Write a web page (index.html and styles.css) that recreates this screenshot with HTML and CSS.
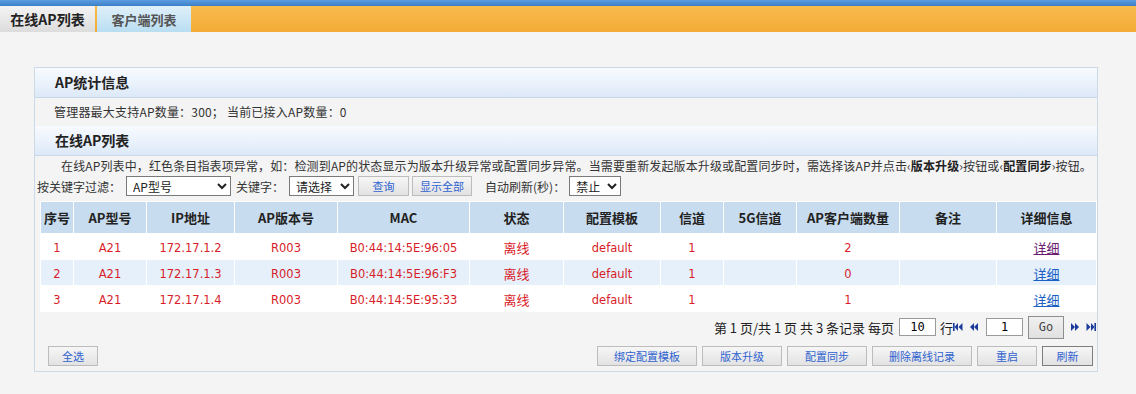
FILE: index.html
```html
<!DOCTYPE html>
<html lang="zh-CN">
  <head>
    <meta charset="UTF-8" />
    <title>在线AP列表</title>
    <link rel="stylesheet" href="styles.css">
  </head>
  <body>
    <div class="topbar"></div>
    <div class="tabs">
      <div class="tab active">在线AP列表</div>
      <div class="tab">客户端列表</div>
    </div>

    <div class="content">
      <div class="panel">
        <div class="panel-head">AP统计信息</div>
        <div class="stats">管理器最大支持AP数量：300； 当前已接入AP数量：0</div>

        <div class="panel-head">在线AP列表</div>
        <p class="note">在线AP列表中，红色条目指表项异常，如：检测到AP的状态显示为版本升级异常或配置同步异常。当需要重新发起版本升级或配置同步时，需选择该AP并点击‹<b>版本升级</b>›按钮或‹<b>配置同步</b>›按钮。</p>

        <div class="filter">
          <span>按关键字过滤：</span>
          <select class="sel-type"><option>AP型号</option></select>
          <span>关键字：</span>
          <select class="sel-key"><option>请选择</option></select>
          <button class="btn btn-query">查询</button>
          <button class="btn btn-all">显示全部</button>
          <span class="refresh-label">自动刷新(秒)：</span>
          <select class="sel-refresh"><option>禁止</option></select>
        </div>

        <table class="ap-table">
          <colgroup>
            <col style="width:32px"><col style="width:72px"><col style="width:87px">
            <col style="width:102px"><col style="width:131px"><col style="width:93px">
            <col style="width:96px"><col style="width:62px"><col style="width:72px">
            <col style="width:102px"><col style="width:96px"><col>
          </colgroup>
          <thead>
            <tr>
              <th>序号</th><th>AP型号</th><th>IP地址</th><th>AP版本号</th><th>MAC</th><th>状态</th>
              <th>配置模板</th><th>信道</th><th>5G信道</th><th>AP客户端数量</th><th>备注</th><th>详细信息</th>
            </tr>
          </thead>
          <tbody>
            <tr>
              <td>1</td><td>A21</td><td>172.17.1.2</td><td>R003</td><td>B0:44:14:5E:96:05</td>
              <td class="cjk">离线</td><td>default</td><td>1</td><td></td><td>2</td><td></td>
              <td><a href="#" class="visited">详细</a></td>
            </tr>
            <tr class="alt">
              <td>2</td><td>A21</td><td>172.17.1.3</td><td>R003</td><td>B0:44:14:5E:96:F3</td>
              <td class="cjk">离线</td><td>default</td><td>1</td><td></td><td>0</td><td></td>
              <td><a href="#">详细</a></td>
            </tr>
            <tr>
              <td>3</td><td>A21</td><td>172.17.1.4</td><td>R003</td><td>B0:44:14:5E:95:33</td>
              <td class="cjk">离线</td><td>default</td><td>1</td><td></td><td>1</td><td></td>
              <td><a href="#">详细</a></td>
            </tr>
          </tbody>
        </table>

        <div class="pager">
          <span>第 1 页/共 1 页 共 3 条记录 每页</span>
          <input class="pg-input pg-rows" type="text" value="10" />
          <span>行</span>
          <svg class="pg-icon" viewBox="0 0 10 10" width="10" height="10"><rect x="0" y="1" width="1.6" height="8" /><polygon points="5,1 5,9 1.5,5" /><polygon points="9.5,1 9.5,9 5.5,5" /></svg>
          <svg class="pg-icon gap" viewBox="0 0 10 10" width="10" height="10"><polygon points="5,1 5,9 1,5" /><polygon points="9,1 9,9 5,5" /></svg>
          <input class="pg-input pg-page" type="text" value="1" />
          <button class="go">Go</button>
          <svg class="pg-icon gap" viewBox="0 0 10 10" width="10" height="10"><polygon points="1,1 1,9 5,5" /><polygon points="5,1 5,9 9,5" /></svg>
          <svg class="pg-icon gap" viewBox="0 0 10 10" width="10" height="10"><polygon points="0.5,1 0.5,9 4.5,5" /><polygon points="5,1 5,9 8.5,5" /><rect x="8.4" y="1" width="1.6" height="8" /></svg>
        </div>

        <div class="actions">
          <button class="btn w-50">全选</button>
          <div class="actions-right">
            <button class="btn w-100">绑定配置模板</button>
            <button class="btn w-80">版本升级</button>
            <button class="btn w-80">配置同步</button>
            <button class="btn w-100">删除离线记录</button>
            <button class="btn w-60">重启</button>
            <button class="btn w-51 dark">刷新</button>
          </div>
        </div>
      </div>
    </div>
  </body>
</html>
```

FILE: styles.css
```css
body {
  margin: 0;
  background-color: #f4f4f4;
  color: #333;
  font-family: "Noto Sans CJK SC", "DejaVu Sans", sans-serif;
  font-size: 12px;
}
.topbar {
  height: 6px;
  background: linear-gradient(#5b9de0, #3b7fc7);
}
.tabs {
  display: flex;
  height: 26px;
  background: linear-gradient(#f8bb4c, #f4ab36);
}
.tab {
  width: 94px;
  margin-right: 3px;
  display: flex;
  align-items: center;
  justify-content: center;
  font-size: 13px;
  font-weight: bold;
  color: #555;
  background: linear-gradient(#dff0fa, #b9ddf1);
}
.tab.active {
  width: 95px;
  margin-right: 2px;
  font-size: 14px;
  color: #222;
  background: linear-gradient(#f4f4f4, #dcdcdc);
}

.content {
  padding: 35px 0 0 34px;
}
.panel {
  box-sizing: border-box;
  width: 1064px;
  border: 1px solid #ccd9e6;
  padding-bottom: 5px;
}
.panel-head {
  height: 29px;
  line-height: 29px;
  padding-left: 20px;
  font-size: 14px;
  font-weight: bold;
  color: #222;
  background: linear-gradient(#f8fbff, #dde9f8);
  border-bottom: 1px solid #c9d8e8;
}
.stats {
  height: 28px;
  line-height: 28px;
  padding-left: 19px;
  letter-spacing: 0.2px;
}
.note {
  margin: 0;
  padding: 1px 0 0 2px;
  height: 18px;
  line-height: 18px;
  text-indent: 2em;
  white-space: nowrap;
  letter-spacing: 0.13px;
}
.note b {
  color: #222;
}
.filter {
  display: flex;
  align-items: center;
  height: 22px;
  padding-left: 2px;
}
.filter select {
  height: 20px;
  font-size: 12px;
  font-family: "Noto Sans CJK SC", sans-serif;
  border: 1px solid #7a7a7a;
  border-radius: 0;
  background: white;
  color: #222;
  padding: 0 0 0 2px;
}
.sel-type { width: 105px; margin: 0 5px 0 5px; }
.sel-key { width: 65px; margin: 0 4px 0 5px; font-size: 13px; }
.sel-refresh { width: 52px; margin-left: 4px; }
.btn-query { width: 51px; margin-right: 3px; }
.btn-all { width: 60px; margin-right: 13px; }

.btn {
  height: 20px;
  padding: 0;
  font-family: "Noto Sans CJK SC", sans-serif;
  font-size: 11px;
  color: #2f63d0;
  background: linear-gradient(#f6f6f6, #e2e2e2);
  border: 1px solid #bcbcbc;
  cursor: pointer;
}
.btn.dark { border-color: #7d7d7d; }
.w-50 { width: 50px; }
.w-51 { width: 51px; }
.w-60 { width: 60px; }
.w-80 { width: 80px; }
.w-100 { width: 100px; }

.ap-table {
  margin: 4px 0 0 5px;
  width: 1057px;
  table-layout: fixed;
  border-spacing: 1px;
  background: white;
  text-align: center;
}
.ap-table th {
  height: 31px;
  padding: 0;
  font-size: 13px;
  color: #222;
  background: #c8dcef;
}
.ap-table td {
  height: 23px;
  padding: 2px 0 0;
  font-family: "DejaVu Sans", "Noto Sans CJK SC", sans-serif;
  font-size: 11.5px;
  color: #d81c28;
}
.ap-table td.cjk {
  font-family: "Noto Sans CJK SC", sans-serif;
  font-size: 13px;
}
.ap-table tr.alt td {
  background: #e5f0fb;
}
.ap-table a {
  font-family: "Noto Sans CJK SC", sans-serif;
  font-size: 13px;
  color: #1a5fc4;
}
.ap-table a.visited {
  color: #6b1e72;
}

.pager {
  display: flex;
  align-items: center;
  justify-content: flex-end;
  height: 26px;
  margin-top: 2px;
  padding-right: 1px;
  font-size: 13px;
  color: #222;
}
.pg-input {
  box-sizing: border-box;
  height: 18px;
  border: 1px solid #9a9a9a;
  text-align: center;
  font-family: "DejaVu Sans Mono", monospace;
  font-size: 12px;
  padding: 0;
}
.pg-rows { width: 37px; margin: 0 4px 0 5px; }
.pg-page { width: 37px; margin-left: 7px; }
.pg-icon {
  fill: #1c3c9c;
  margin-left: 0;
}
.pg-icon.gap { margin-left: 6px; }
.go {
  box-sizing: border-box;
  width: 36px;
  height: 23px;
  margin-left: 5px;
  padding: 0;
  font-family: "DejaVu Sans Mono", monospace;
  font-size: 12px;
  color: #444;
  background: linear-gradient(#f0f0f0, #e0e0e0);
  border: 1px solid #8e8e8e;
}

.actions {
  display: flex;
  justify-content: space-between;
  margin-top: 6px;
  padding: 0 4px 0 13px;
}
.actions-right {
  display: flex;
  gap: 5px;
}
```
